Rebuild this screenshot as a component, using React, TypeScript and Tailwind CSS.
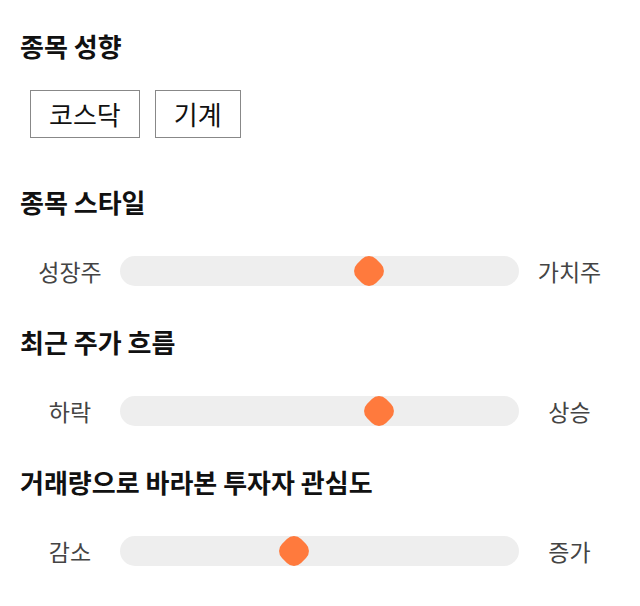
import React from 'react';

const FONT = "font-['Noto_Sans_CJK_KR','Noto_Sans',sans-serif]";

interface SliderRow {
  title: string;
  left: string;
  right: string;
  value: number; // thumb centre, % of the track
}

const sliders: SliderRow[] = [
  { title: '종목 스타일', left: '성장주', right: '가치주', value: 62.5 },
  { title: '최근 주가 흐름', left: '하락', right: '상승', value: 65 },
  { title: '거래량으로 바라본 투자자 관심도', left: '감소', right: '증가', value: 43.7 },
];

function Heading({ children }: { children: React.ReactNode }) {
  return <h2 className="text-[26px] leading-[36px] font-bold text-[#111111]">{children}</h2>;
}

function Slider({ row }: { row: SliderRow }) {
  return (
    <div className="mt-[36px] flex items-center h-[30px]">
      <span className="w-[100px] text-center text-[23px] text-[#444444] leading-[30px]">{row.left}</span>
      <div className="relative flex-1 h-[30px] rounded-full bg-[#eeeeee]">
        <div
          className="absolute top-1/2 w-[27px] h-[27px] -translate-x-1/2 -translate-y-1/2 rotate-45 rounded-[10px] bg-[#ff7a3d]"
          style={{ left: `${row.value}%` }}
        />
      </div>
      <span className="w-[101px] text-center text-[23px] text-[#444444] leading-[30px]">{row.right}</span>
    </div>
  );
}

export default function App() {
  return (
    <div className={`${FONT} bg-white w-[640px] h-[606px] px-5 pt-[28px] flex flex-col`}>
      <section>
        <Heading>종목 성향</Heading>
        <div className="mt-[26px] ml-[10px] flex gap-[15px]">
          {['코스닥', '기계'].map((tag) => (
            <span
              key={tag}
              className="border border-[#888888] px-[18px] py-[5px] text-[26px] leading-[36px] text-[#111111]"
            >
              {tag}
            </span>
          ))}
        </div>
      </section>

      {sliders.map((row, i) => (
        <section key={row.title} className={i === 0 ? 'mt-[46px]' : 'mt-[38px]'}>
          <Heading>{row.title}</Heading>
          <Slider row={row} />
        </section>
      ))}
    </div>
  );
}
